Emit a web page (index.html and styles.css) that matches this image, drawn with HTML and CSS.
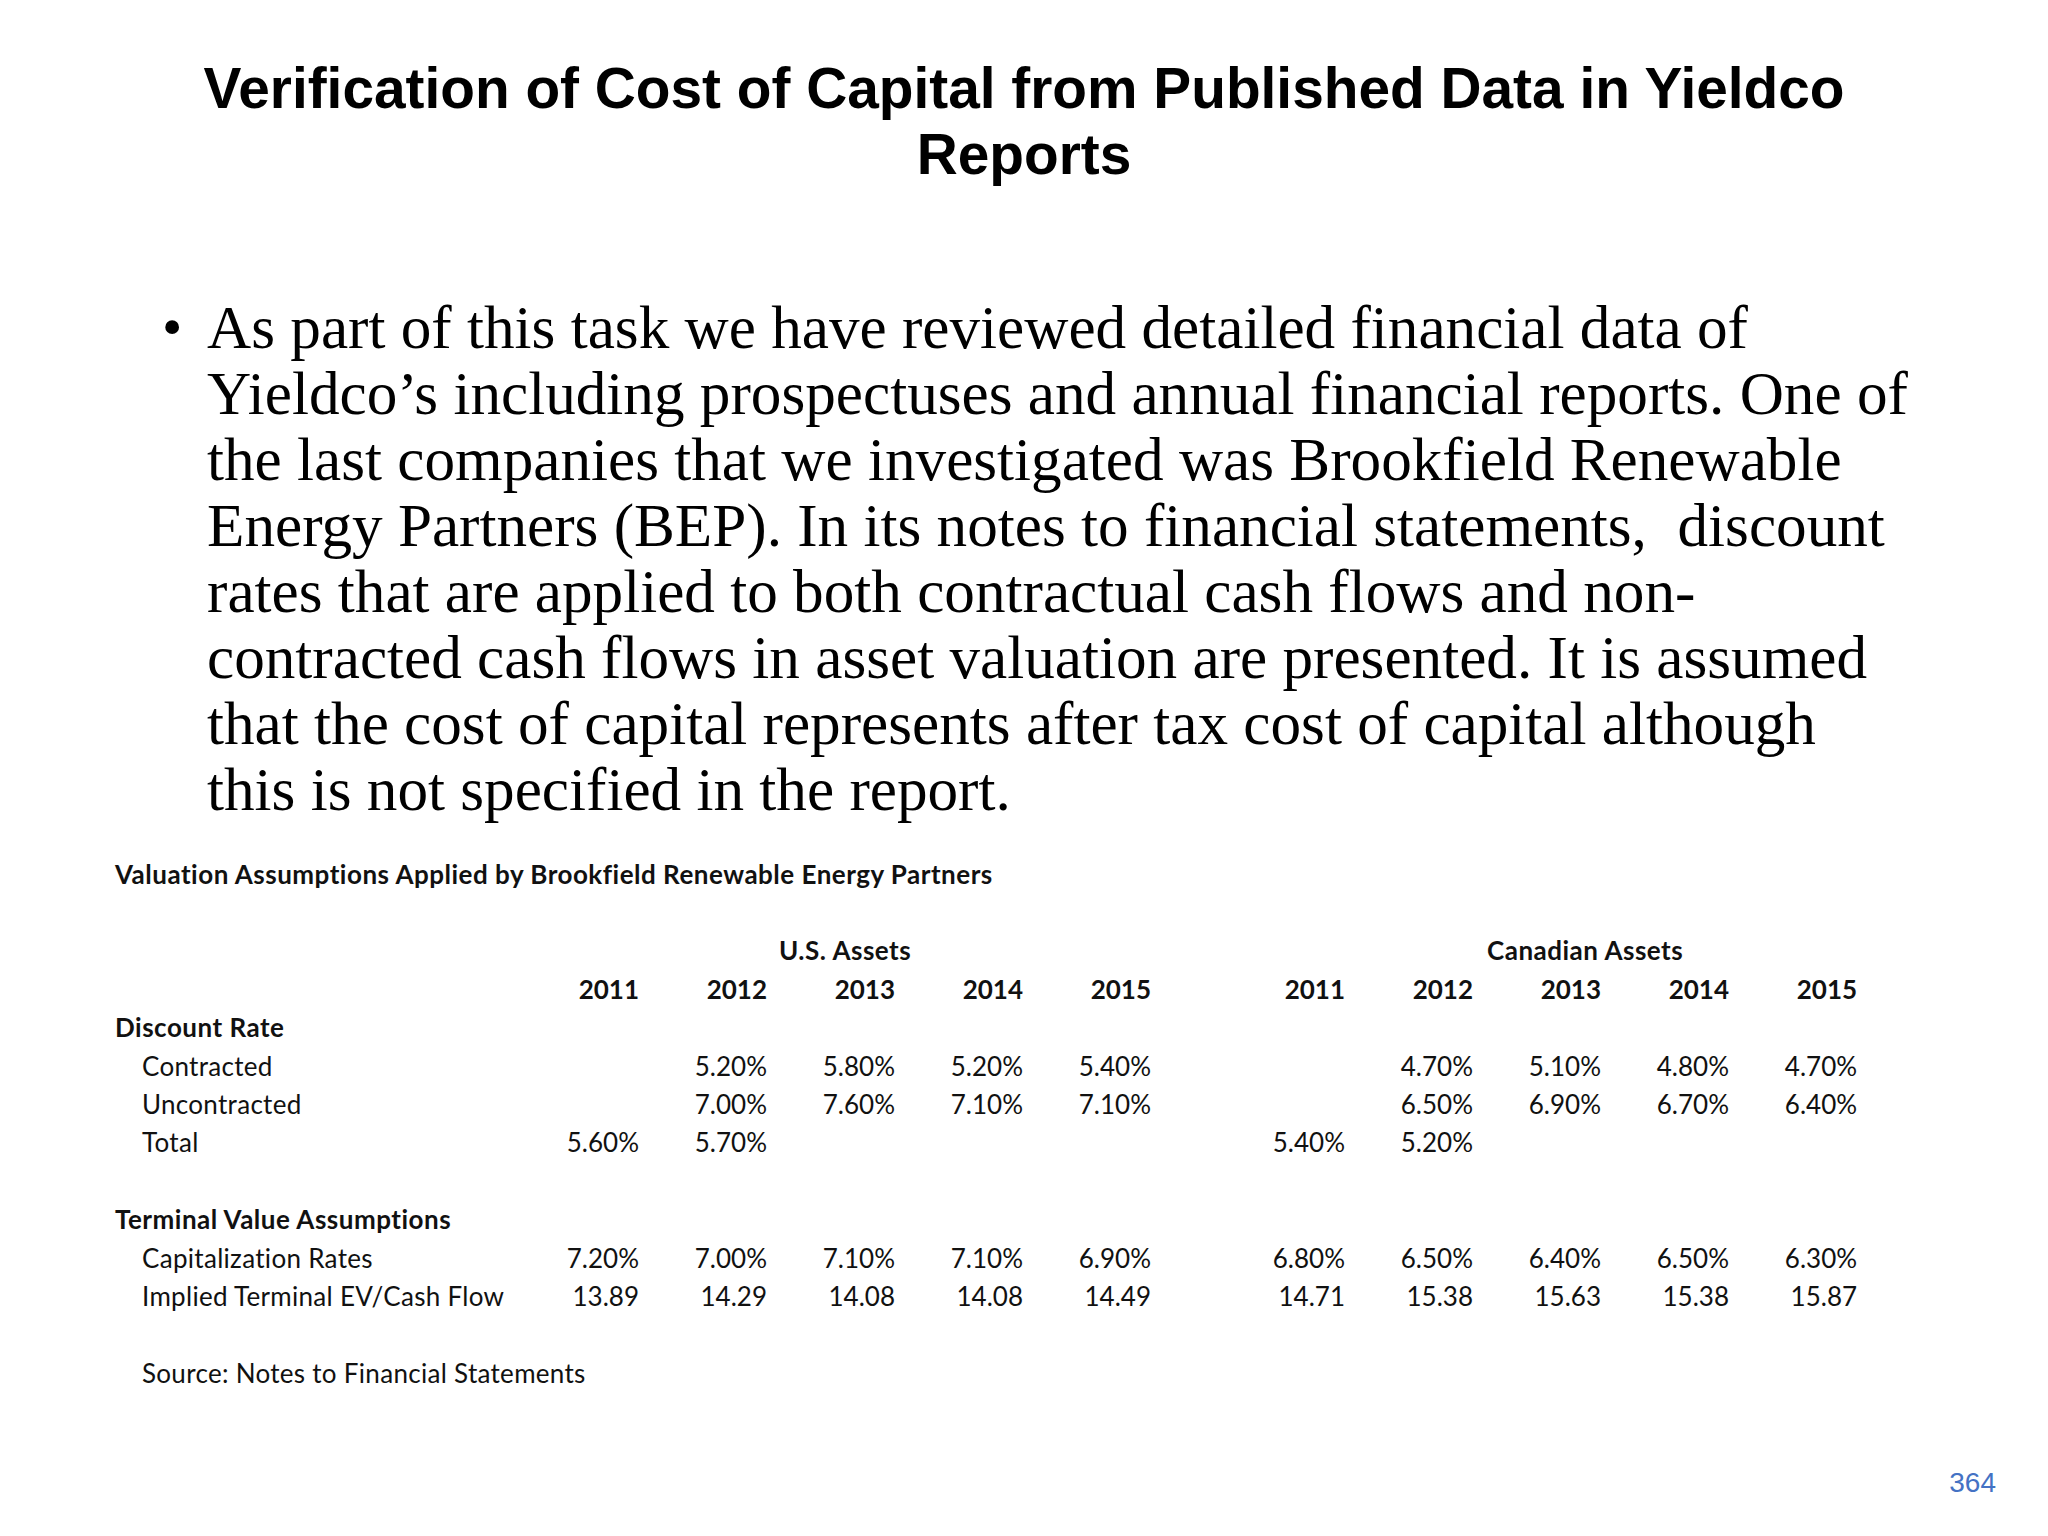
FILE: index.html
```html
<!DOCTYPE html>
<html lang="en">
<head>
<meta charset="utf-8">
<title>Verification of Cost of Capital</title>
<link rel="stylesheet" href="styles.css">
</head>
<body>
<div class="slide">
  <h1 class="title">Verification of Cost of Capital from Published Data in Yieldco<br>Reports</h1>

  <div class="bullet">
    <span class="dot">•</span>
    <p class="btext">As part of this task we have reviewed detailed financial data of<br>Yieldco’s including prospectuses and annual financial reports. One of<br>the last companies that we investigated was Brookfield Renewable<br>Energy Partners (BEP). In its notes to financial statements,&nbsp; discount<br>rates that are applied to both contractual cash flows and non-<br>contracted cash flows in asset valuation are presented. It is assumed<br>that the cost of capital represents after tax cost of capital although<br>this is not specified in the report.</p>
  </div>

  <table class="val">
    <colgroup>
      <col class="c-label">
      <col class="c-num"><col class="c-num"><col class="c-num"><col class="c-num"><col class="c-num">
      <col class="c-gap">
      <col class="c-num"><col class="c-num"><col class="c-num"><col class="c-num"><col class="c-num">
    </colgroup>
    <tbody>
      <tr><td class="caption" colspan="12">Valuation Assumptions Applied by Brookfield Renewable Energy Partners</td></tr>
      <tr><td colspan="12"></td></tr>
      <tr>
        <td></td>
        <td class="group group-us" colspan="5">U.S. Assets</td>
        <td></td>
        <td class="group group-ca" colspan="5">Canadian Assets</td>
      </tr>
      <tr class="years">
        <td></td>
        <td>2011</td><td>2012</td><td>2013</td><td>2014</td><td>2015</td>
        <td></td>
        <td>2011</td><td>2012</td><td>2013</td><td>2014</td><td>2015</td>
      </tr>
      <tr><td class="section" colspan="12">Discount Rate</td></tr>
      <tr>
        <td class="label">Contracted</td>
        <td></td><td>5.20%</td><td>5.80%</td><td>5.20%</td><td>5.40%</td>
        <td></td>
        <td></td><td>4.70%</td><td>5.10%</td><td>4.80%</td><td>4.70%</td>
      </tr>
      <tr>
        <td class="label">Uncontracted</td>
        <td></td><td>7.00%</td><td>7.60%</td><td>7.10%</td><td>7.10%</td>
        <td></td>
        <td></td><td>6.50%</td><td>6.90%</td><td>6.70%</td><td>6.40%</td>
      </tr>
      <tr>
        <td class="label">Total</td>
        <td>5.60%</td><td>5.70%</td><td></td><td></td><td></td>
        <td></td>
        <td>5.40%</td><td>5.20%</td><td></td><td></td><td></td>
      </tr>
      <tr><td colspan="12"></td></tr>
      <tr><td class="section" colspan="12">Terminal Value Assumptions</td></tr>
      <tr>
        <td class="label">Capitalization Rates</td>
        <td>7.20%</td><td>7.00%</td><td>7.10%</td><td>7.10%</td><td>6.90%</td>
        <td></td>
        <td>6.80%</td><td>6.50%</td><td>6.40%</td><td>6.50%</td><td>6.30%</td>
      </tr>
      <tr>
        <td class="label">Implied Terminal EV/Cash Flow</td>
        <td>13.89</td><td>14.29</td><td>14.08</td><td>14.08</td><td>14.49</td>
        <td></td>
        <td>14.71</td><td>15.38</td><td>15.63</td><td>15.38</td><td>15.87</td>
      </tr>
      <tr><td colspan="12"></td></tr>
      <tr><td class="label source" colspan="12">Source: Notes to Financial Statements</td></tr>
    </tbody>
  </table>

  <div class="footer">364</div>
</div>
</body>
</html>
```

FILE: styles.css
```css
html, body {
  margin: 0;
  padding: 0;
  background: #ffffff;
}

.slide {
  width: 2048px;
  height: 1536px;
  display: flex;
  flex-direction: column;
  color: #000000;
}

.title {
  margin: 0;
  padding-top: 56px;
  font-family: "Liberation Sans", Arial, sans-serif;
  font-weight: bold;
  font-size: 56.8px;
  line-height: 66px;
  text-align: center;
}

.bullet {
  display: flex;
  margin-top: 106px;
  padding-left: 162px;
}

.dot {
  flex: 0 0 45px;
  font-family: "Liberation Serif", "Times New Roman", serif;
  font-size: 58px;
  line-height: 66px;
}

.btext {
  margin: 0;
  font-family: "Liberation Serif", "Times New Roman", serif;
  font-size: 61.2px;
  line-height: 66px;
  white-space: nowrap;
}

.val {
  margin-top: 32.5px;
  margin-left: 115px;
  border-collapse: collapse;
  border-spacing: 0;
  table-layout: fixed;
  width: 1742px;
  font-family: Lato, "Open Sans", sans-serif;
  font-size: 26px;
  color: #111111;
}

.c-label { width: 396px; }
.c-num { width: 128px; }
.c-gap { width: 66px; }

.val td {
  padding: 0;
  height: 38.4px;
  line-height: 38.4px;
  vertical-align: middle;
  text-align: right;
  white-space: nowrap;
}

.val td.caption,
.val td.section,
.val td.label,
.val td.group {
  text-align: left;
}

.val td.caption,
.val td.section,
.val td.group,
.years td {
  font-weight: bold;
}

.val td.caption,
.val td.section,
.val td.group {
  letter-spacing: 0.5px;
}

.val td.label {
  padding-left: 27px;
  letter-spacing: 0.3px;
}

.val td.group-us {
  padding-left: 268px;
}

.val td.group-ca {
  padding-left: 270px;
}

.footer {
  margin-top: auto;
  padding-right: 52px;
  padding-bottom: 36.7px;
  text-align: right;
  font-family: "Liberation Sans", Arial, sans-serif;
  font-size: 28px;
  line-height: 32px;
  color: #4472c4;
}
```
